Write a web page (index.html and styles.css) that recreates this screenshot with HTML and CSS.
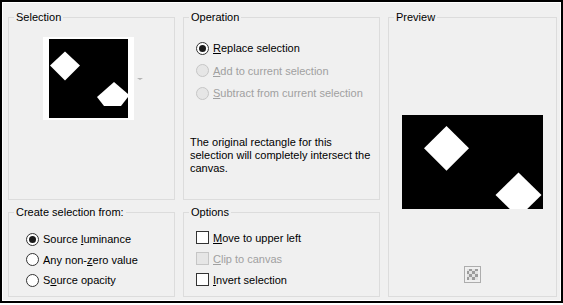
FILE: index.html
```html
<!DOCTYPE html>
<html lang="en">
<head>
    <meta charset="UTF-8">
    <title>Selection from mask</title>
    <link rel="stylesheet" href="styles.css">
</head>
<body>
    <div class="dialog">
        <!-- source thumbnail -->
        <fieldset class="group">
            <legend>Selection</legend>
            <div class="thumb-row">
                <div class="thumb">
                    <svg width="79" height="79" viewBox="0 0 79 79">
                        <rect width="79" height="79" fill="#000"/>
                        <polygon points="16,12.5 31,26.5 16,41.5 1,26.5" fill="#fff"/>
                        <polygon points="65,43 79,55 79,58 72,67 55,67 48,58" fill="#fff"/>
                    </svg>
                </div>
                <span class="thumb-arrow"></span>
            </div>
        </fieldset>

        <fieldset class="group">
            <legend>Operation</legend>
            <div class="choices op-choices">
                <div class="choice"><span class="radio checked"></span><span><u>R</u>eplace selection</span></div>
                <div class="choice disabled"><span class="radio"></span><span><u>A</u>dd to current selection</span></div>
                <div class="choice disabled"><span class="radio"></span><span><u>S</u>ubtract from current selection</span></div>
            </div>
            <p class="note">The original rectangle for this<br>selection will completely intersect the<br>canvas.</p>
        </fieldset>

        <fieldset class="group preview">
            <legend>Preview</legend>
            <div class="preview-body">
                <svg class="preview-img" width="141" height="94" viewBox="0 0 141 94">
                    <rect width="141" height="94" fill="#000"/>
                    <polygon points="44.5,11 67,33.3 44.5,55.7 22,33.3" fill="#fff"/>
                    <polygon points="116.5,57.5 139.5,80 116.5,102.5 93.5,80" fill="#fff"/>
                </svg>
                <span class="checker"></span>
            </div>
        </fieldset>

        <fieldset class="group">
            <legend>Create selection from:</legend>
            <div class="choices from-choices">
                <div class="choice"><span class="radio checked"></span><span>Source <u>l</u>uminance</span></div>
                <div class="choice"><span class="radio"></span><span>Any non-<u>z</u>ero value</span></div>
                <div class="choice"><span class="radio"></span><span>S<u>o</u>urce opacity</span></div>
            </div>
        </fieldset>

        <fieldset class="group">
            <legend>Options</legend>
            <div class="choices opt-choices">
                <div class="choice"><span class="check"></span><span><u>M</u>ove to upper left</span></div>
                <div class="choice disabled"><span class="check"></span><span><u>C</u>lip to canvas</span></div>
                <div class="choice"><span class="check"></span><span><u>I</u>nvert selection</span></div>
            </div>
        </fieldset>
    </div>
</body>
</html>
```

FILE: styles.css
```css
body {
    margin: 0;
    background-color: #fff;
    font-family: "Liberation Sans", Arial, sans-serif;
    font-size: 11px;
    color: #000;
}
.dialog {
    width: 563px;
    height: 303px;
    box-sizing: border-box;
    border: 2px solid #000;
    box-shadow: inset 0 0 0 1px #fff;
    background-color: #f0f0f0;
    padding: 8px 0 0 6px;
    display: grid;
    grid-template-columns: 167px 197px 169px;
    grid-template-rows: 190px 92px;
    column-gap: 8px;
    row-gap: 5px;
}
.group {
    margin: 0;
    padding: 0;
    min-width: 0;
    border: 1px solid #dcdcdc;
    box-sizing: border-box;
}
.group legend {
    margin-left: 5px;
    padding: 0 2px;
    line-height: 14px;
}
.preview {
    grid-column: 3;
    grid-row: 1 / 3;
}
/* selection thumbnail */
.thumb-row {
    display: flex;
    align-items: center;
    gap: 3px;
    margin: 13px 0 0 34px;
}
.thumb {
    background-color: #fff;
    padding: 2px 6px;
    line-height: 0;
}
.thumb-arrow {
    width: 0;
    height: 0;
    border-left: 3px solid transparent;
    border-right: 3px solid transparent;
    border-top: 2px solid #b4b4b4;
}
/* radio and check rows */
.choices {
    display: flex;
    flex-direction: column;
}
.choice {
    display: flex;
    align-items: center;
    gap: 4px;
}
.choice.disabled {
    color: #a0a0a0;
}
.op-choices {
    margin: 13px 0 0 12px;
}
.op-choices .choice {
    height: 22.5px;
}
.from-choices {
    margin: 10px 0 0 17px;
}
.from-choices .choice {
    height: 20.5px;
}
.opt-choices {
    margin: 8px 0 0 12px;
}
.opt-choices .choice {
    height: 21px;
}
.radio {
    width: 11px;
    height: 11px;
    border: 1px solid #333;
    border-radius: 50%;
    background-color: #fff;
    display: flex;
    align-items: center;
    justify-content: center;
}
.radio.checked::after {
    content: "";
    width: 7px;
    height: 7px;
    border-radius: 50%;
    background-color: #1b1b1b;
}
.check {
    width: 11px;
    height: 11px;
    border: 1px solid #333;
    background-color: #fff;
}
.disabled .radio,
.disabled .check {
    border-color: #c6c6c6;
    background-color: #e6e6e6;
}
.note {
    margin: 31px 0 0 6px;
    line-height: 13px;
}
/* preview panel */
.preview-body {
    display: flex;
    flex-direction: column;
    align-items: center;
}
.preview-img {
    margin-top: 91px;
}
.checker {
    margin-top: 57px;
    width: 11px;
    height: 11px;
    border: 1px solid #adadad;
    padding: 2px;
    background: repeating-conic-gradient(#9c9c9c 0 25%, #e2e2e2 0 50%) content-box;
    background-size: 6px 6px;
    background-position: 2px 2px;
}
```
